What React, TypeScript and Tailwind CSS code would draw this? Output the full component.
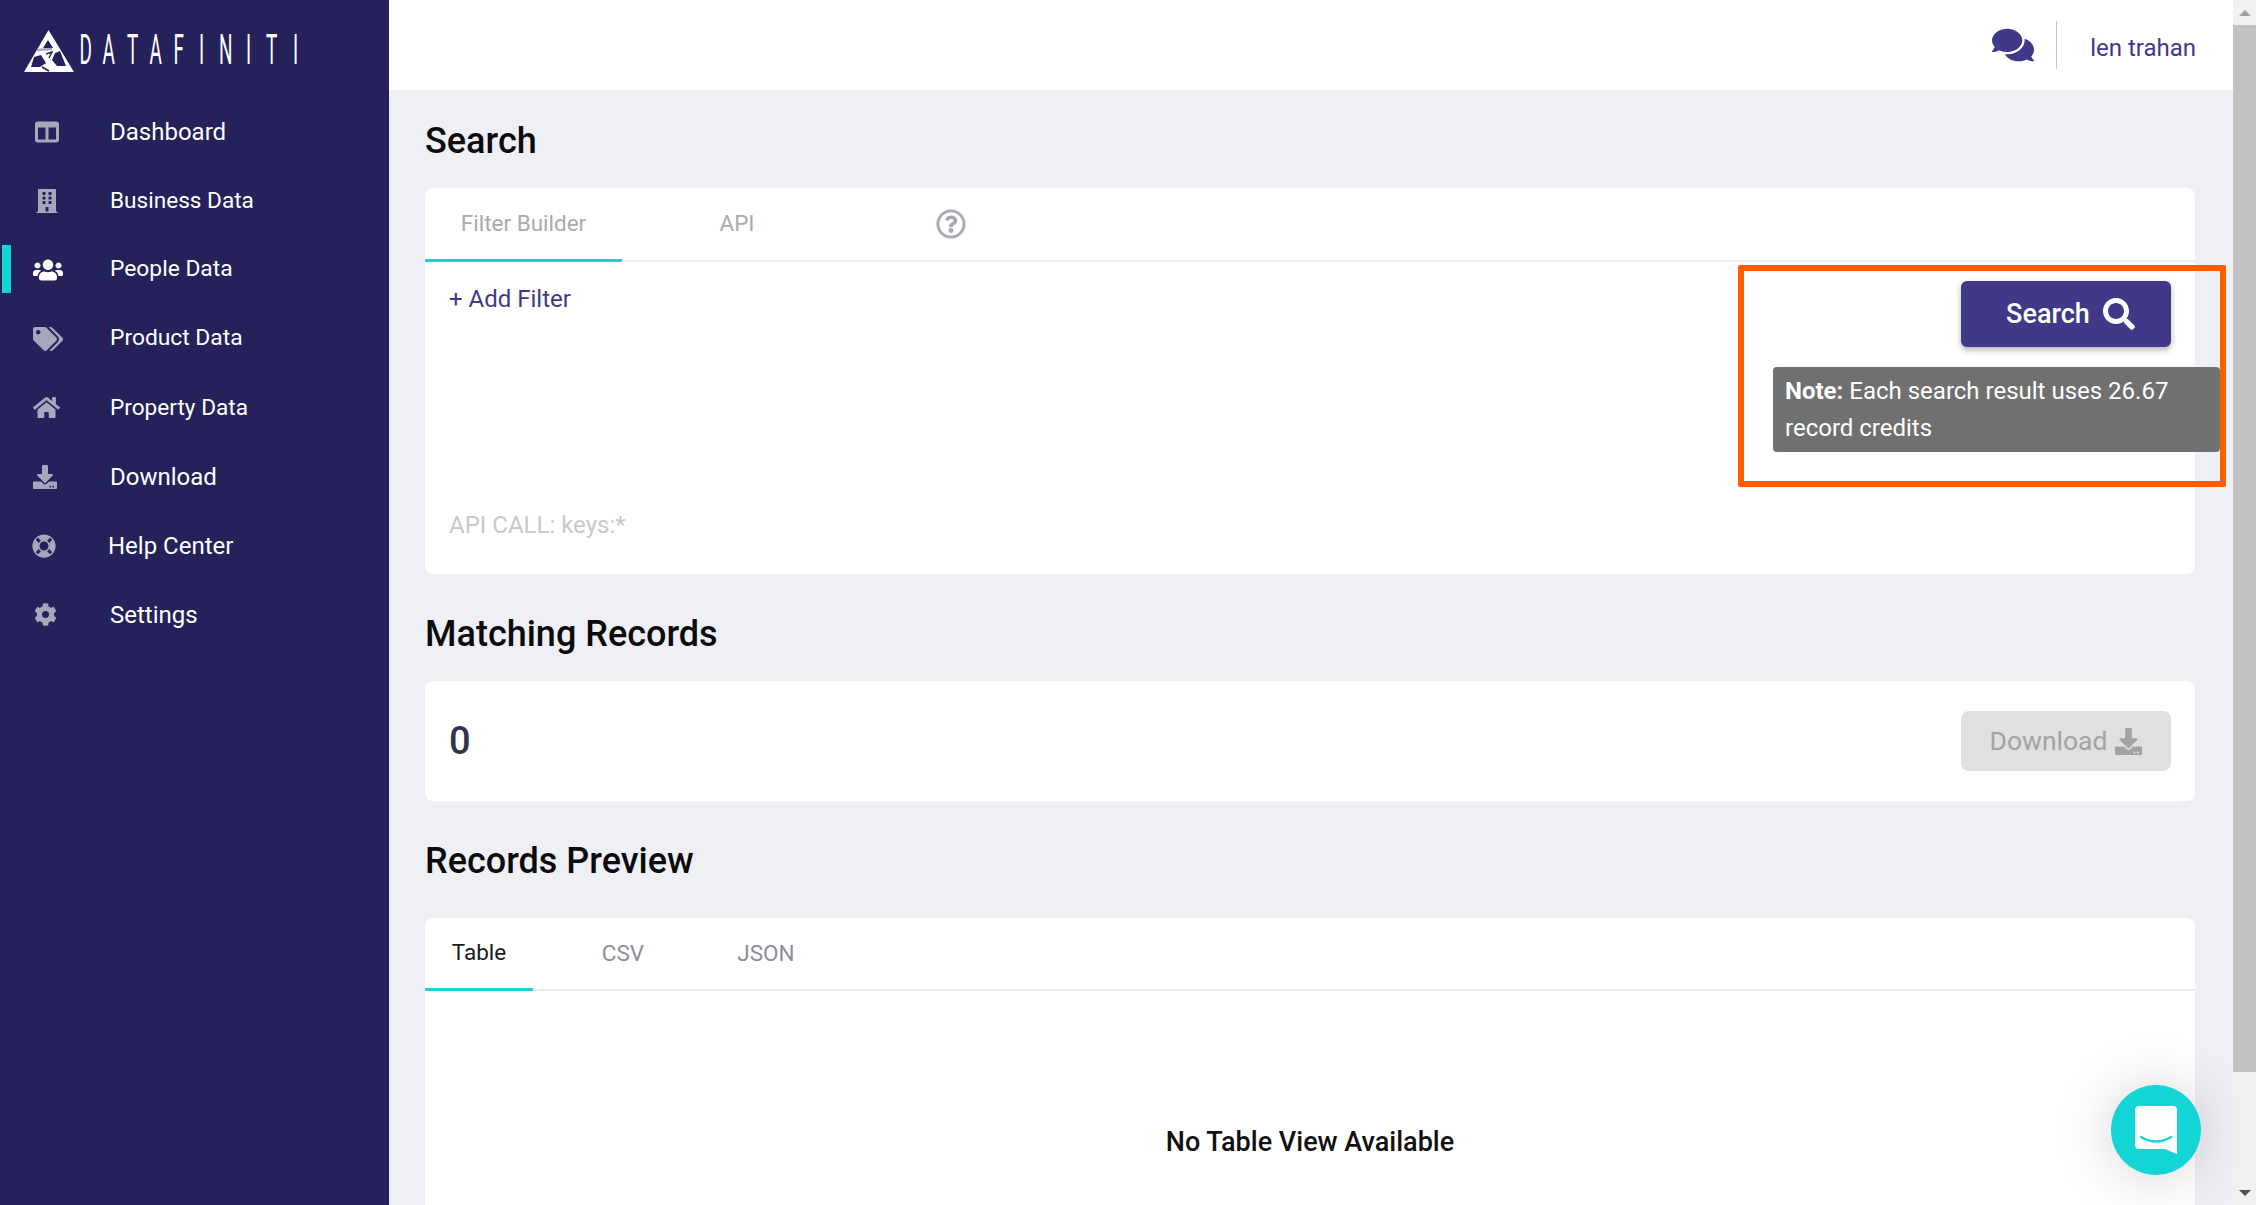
import { IconType } from 'react-icons';
import {
  FaColumns,
  FaBuilding,
  FaUsers,
  FaTags,
  FaHome,
  FaDownload,
  FaLifeRing,
  FaCog,
  FaComments,
  FaSearch,
  FaRegQuestionCircle,
} from 'react-icons/fa';

const navItems: { label: string; icon: IconType; iconClass: string; textClass: string; active?: boolean }[] = [
  { label: 'Dashboard', icon: FaColumns, iconClass: 'text-[24px]', textClass: 'text-[24px] ml-[48px]' },
  { label: 'Business Data', icon: FaBuilding, iconClass: 'text-[24px]', textClass: 'text-[22.6px] ml-[48px]' },
  { label: 'People Data', icon: FaUsers, iconClass: 'text-[30px] translate-x-[1px]', textClass: 'text-[22.8px] ml-[48px]', active: true },
  { label: 'Product Data', icon: FaTags, iconClass: 'text-[30px] translate-x-[1px]', textClass: 'text-[22.8px] ml-[48px]' },
  { label: 'Property Data', icon: FaHome, iconClass: 'text-[27px] -translate-x-[1px]', textClass: 'text-[22.6px] ml-[48px]' },
  { label: 'Download', icon: FaDownload, iconClass: 'text-[24px] -translate-x-[2px]', textClass: 'text-[24px] ml-[48px]' },
  { label: 'Help Center', icon: FaLifeRing, iconClass: 'text-[24px] -translate-x-[3px]', textClass: 'text-[24px] ml-[46px]' },
  { label: 'Settings', icon: FaCog, iconClass: 'text-[23px] -translate-x-[2px]', textClass: 'text-[24px] ml-[48px]' },
];

function Logo() {
  return (
    <div className="flex items-end h-[90px] pb-[18px] pl-[24px]">
      <svg width="50" height="42" viewBox="0 0 50 42" className="shrink-0">
        <path d="M24.5 0 L50 42 L0 42 Z" fill="#fff" />
        <path d="M24 10 L29 18 L19 18 Z M10 27 L17 25 L22 33 L16 37 L7 37 Z M31 23 L36 21 L42 36 L33 36 L28 30 Z" fill="#24215b" />
        <path d="M13 20 L28 19" stroke="#a7a6bd" strokeWidth="2.5" fill="none" />
        <path d="M22 24 L28 22 L25 28 M18 37 L25 41" stroke="#24215b" strokeWidth="1.5" fill="none" />
      </svg>
      <div className="flex mb-[7px] text-[42px] leading-[30px] text-white">
        {'DATAFINITI'.split('').map((letter, i) => (
          <span key={i} className="flex justify-center w-[23.3px] scale-x-[0.45]">
            {letter}
          </span>
        ))}
      </div>
    </div>
  );
}

function Sidebar() {
  return (
    <aside className="w-[389px] shrink-0 bg-[#24215b] h-full">
      <Logo />
      <nav className="flex flex-col pt-[7px]">
        {navItems.map(({ label, icon: Icon, iconClass, textClass, active }) => (
          <div key={label} className="relative flex items-center h-[69px]">
            {active && <div className="absolute left-[2px] top-[10px] w-[9px] h-[48px] bg-[#14d5d5]" />}
            <div className="flex justify-center w-[30px] ml-[32px]">
              <Icon className={`${iconClass} ${active ? 'text-white' : 'text-[#a7a6bd]'}`} />
            </div>
            <span className={`text-white ${textClass}`}>{label}</span>
          </div>
        ))}
      </nav>
    </aside>
  );
}

function TopBar() {
  return (
    <header className="h-[90px] bg-white flex items-center justify-end pr-[37px] shrink-0">
      <FaComments className="text-[#40398a] text-[42px]" />
      <div className="w-px h-[48px] bg-[#c4c4cf] ml-[22px] mr-[33px]" />
      <span className="text-[#40398a] text-[24px] translate-y-[3px]">len trahan</span>
    </header>
  );
}

function Heading({ children }: { children: string }) {
  return <h2 className="text-[36px] font-medium leading-[40px] text-[#0b0b0b] translate-y-[1px]">{children}</h2>;
}

function SearchCard() {
  return (
    <div className="mt-[28px] bg-white rounded-lg h-[386px] flex flex-col">
      <div className="flex items-stretch h-[74px] shrink-0 border-b-2 border-[#eceef0] text-[22.5px] text-[#a9a8b8]">
        <div className="w-[197px] flex items-center justify-center border-b-[3px] border-[#14d5d5] -mb-[2px]">Filter Builder</div>
        <div className="w-[230px] flex items-center justify-center">API</div>
        <div className="flex items-center ml-[84px]">
          <FaRegQuestionCircle className="text-[30px]" />
        </div>
      </div>
      <div className="flex-1 px-[24px] flex flex-col justify-between pt-[22px] pb-[34px]">
        <span className="text-[#40398a] text-[24px] leading-[30px]">+ Add Filter</span>
        <span className="text-[#c7c7d0] text-[24px] leading-[30px]">API CALL: keys:*</span>
      </div>
    </div>
  );
}

function MatchingCard() {
  return (
    <div className="mt-[28px] bg-white rounded-lg h-[120px] flex items-center justify-between pl-[24px] pr-[24px]">
      <span className="text-[38px] font-medium text-[#33324f]">0</span>
      <button className="w-[210px] h-[60px] rounded-lg bg-[#e0e0e0] text-[#a3a3a3] text-[26.5px] flex items-center justify-center gap-[8px]">
        Download
        <FaDownload className="text-[27px]" />
      </button>
    </div>
  );
}

function PreviewCard() {
  return (
    <div className="mt-[38px] bg-white rounded-t-lg flex-1 flex flex-col">
      <div className="flex items-stretch h-[73px] shrink-0 border-b-2 border-[#eceef0] text-[22.5px] text-[#8d8c9c]">
        <div className="w-[108px] flex items-center justify-center border-b-[3px] border-[#14d5d5] -mb-[2px] text-[#1b1b1b]">Table</div>
        <div className="w-[90px] ml-[45px] flex items-center justify-center">CSV</div>
        <div className="w-[90px] ml-[53px] flex items-center justify-center">JSON</div>
      </div>
      <div className="flex justify-center pt-[131px] text-[27px] font-medium text-[#111]">No Table View Available</div>
    </div>
  );
}

function Scrollbar() {
  return (
    <div className="w-[23px] shrink-0 bg-[#f1f1f1] flex flex-col items-center h-full">
      <div className="h-[25px] flex items-center justify-center">
        <div className="w-0 h-0 border-x-[6px] border-x-transparent border-b-[6px] border-b-[#a3a3a3]" />
      </div>
      <div className="w-full h-[1047px] bg-[#c1c1c1]" />
      <div className="flex-1" />
      <div className="h-[25px] flex items-center justify-center">
        <div className="w-0 h-0 border-x-[6px] border-x-transparent border-t-[6px] border-t-[#505050]" />
      </div>
    </div>
  );
}

export default function App() {
  return (
    <div className="relative flex h-screen overflow-hidden bg-[#eff0f5] font-['Roboto',sans-serif]">
      <Sidebar />
      <div className="flex-1 flex flex-col min-w-0 h-full">
        <TopBar />
        <main className="flex-1 flex flex-col pl-[36px] pr-[38px] pt-[30px]">
          <Heading>Search</Heading>
          <SearchCard />
          <div className="h-[39px]" />
          <Heading>Matching Records</Heading>
          <MatchingCard />
          <div className="h-[39px]" />
          <Heading>Records Preview</Heading>
          <PreviewCard />
        </main>
      </div>
      <Scrollbar />

      {/* search action and the note hang over the card */}
      <button className="absolute left-[1961px] top-[281px] w-[210px] h-[66px] pl-[9px] rounded-md bg-[#40398a] text-white text-[27px] font-medium flex items-center justify-center gap-[13px] shadow-[0_3px_6px_rgba(0,0,0,0.3)]">
        Search
        <FaSearch className="text-[32px]" />
      </button>
      <div className="absolute left-[1773px] top-[367px] w-[447px] h-[85px] rounded bg-[#707070] text-white text-[24px] leading-[37px] px-[12px] py-[6px]">
        <b>Note:</b> Each search result uses 26.67 record credits
      </div>
      <div className="absolute left-[1738px] top-[265px] w-[488px] h-[222px] border-[6px] border-[#ff5c00] rounded-[2px]" />

      <div className="absolute left-[2111px] top-[1085px] w-[90px] h-[90px] rounded-full bg-[#14d5d5] flex items-center justify-center shadow-[0_2px_60px_rgba(0,0,0,0.18)]">
        <svg width="42" height="48" viewBox="0 0 42 48">
          <path d="M4 0 H38 Q42 0 42 4 V48 L30 43 H4 Q0 43 0 39 V4 Q0 0 4 0 Z" fill="#fff" />
          <path d="M6 31 Q21 40 36 31" stroke="#14d5d5" strokeWidth="2.5" fill="none" strokeLinecap="round" />
        </svg>
      </div>
    </div>
  );
}
